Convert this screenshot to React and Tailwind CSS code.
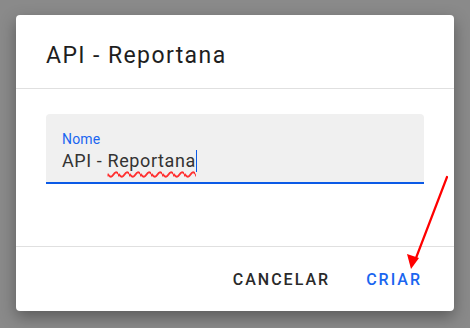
export default function App() {
  return (
    <div className="relative w-[470px] h-[328px] bg-[#8a8a8a] overflow-hidden pl-[16px] pt-[15px]" style={{ fontFamily: "Roboto, 'Liberation Sans', sans-serif" }}>
      <div className="w-[438px] h-[296px] bg-white rounded-[4px] flex flex-col shadow-[0_6px_16px_rgba(0,0,0,0.35)]">
        <div className="h-[74px] border-b border-[#e0e0e0] pl-[30px] pt-[27px]">
          <div className="text-[23px] leading-[28px] font-normal text-[#1e1e1e] tracking-[1.4px]">API - Reportana</div>
        </div>
        <div className="h-[158px] border-b border-[#e0e0e0] px-[30px] pt-[25px]">
          <div className="h-[70px] bg-[#f0f0f0] rounded-t-[4px] border-b-2 border-[#0b5ae6] pl-[16px] pt-[16px]">
            <div className="text-[14px] leading-[18px] text-[#1a66f0] tracking-[0.2px]">Nome</div>
            <div className="text-[18px] leading-[26px] text-[#333] tracking-[0.6px] whitespace-pre flex items-center">
              <span>API - </span>
              <span className="underline decoration-wavy decoration-[#ff3030] decoration-[1.5px] underline-offset-[4px]">Reportana</span>
              <span className="inline-block w-px h-[22px] bg-[#0b5ae6]"></span>
            </div>
          </div>
        </div>
        <div className="flex-1 flex justify-end items-center pr-[32px] gap-[36px] pt-[2px]">
          <div className="text-[16px] font-medium tracking-[2px] text-[#2a2a2a]">CANCELAR</div>
          <div className="text-[16px] font-medium tracking-[2px] text-[#1a66f0]">CRIAR</div>
        </div>
      </div>
      <svg className="absolute left-0 top-0" width="470" height="328" viewBox="0 0 470 328">
        <line x1="447" y1="177" x2="416" y2="258" stroke="#ff0000" strokeWidth="2.2" strokeLinecap="round" />
        <polygon points="411,269 407,254 419,258" fill="#ff0000" />
      </svg>
    </div>
  );
}
